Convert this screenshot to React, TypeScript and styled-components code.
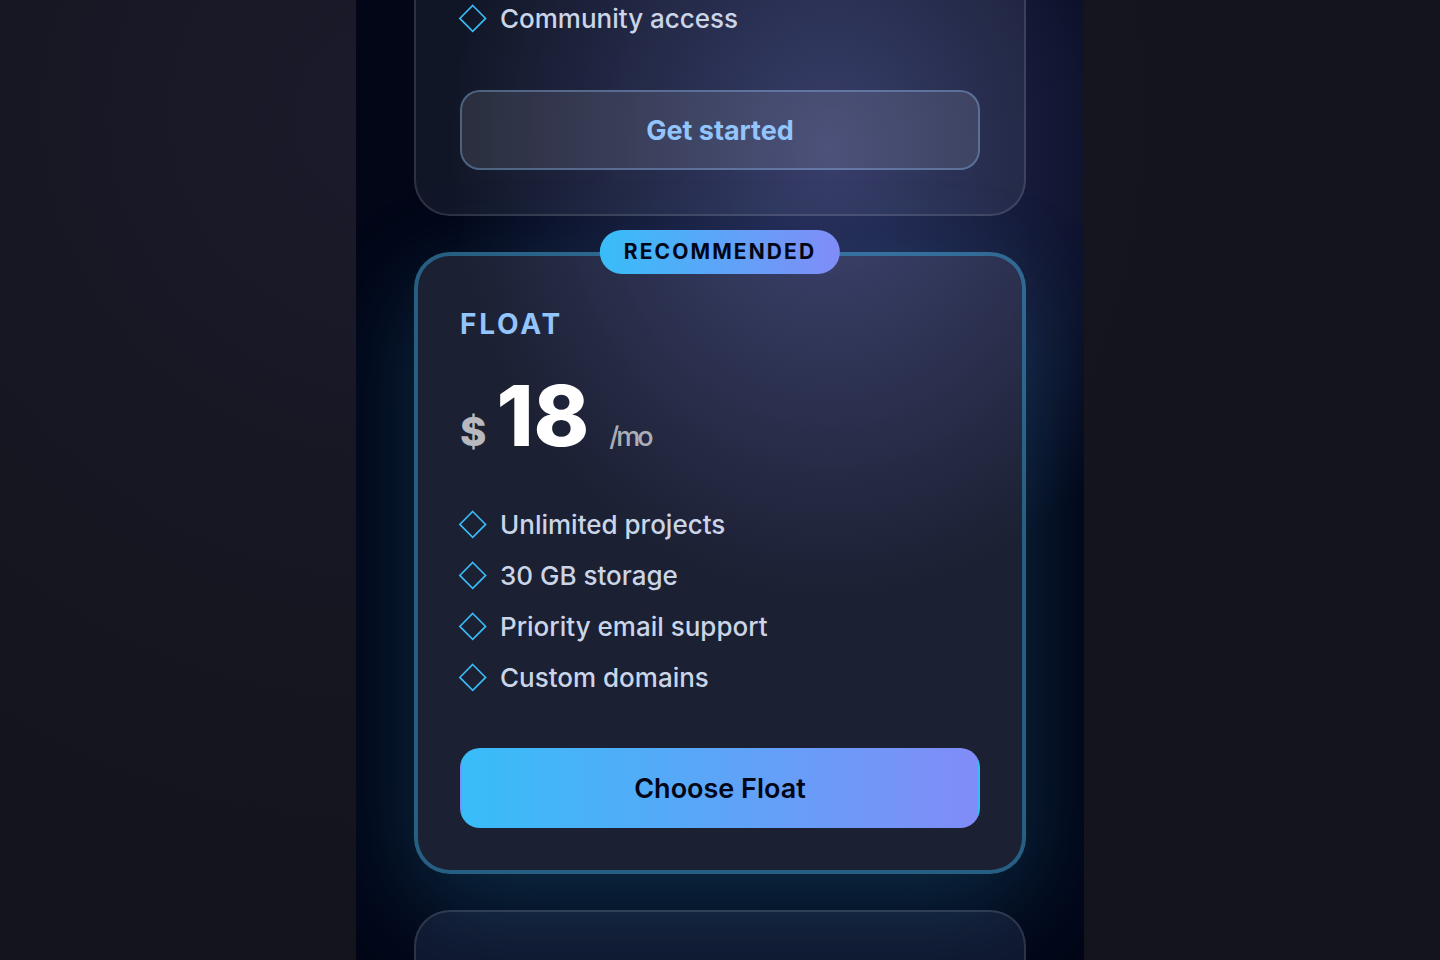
import React from "react";
import styled, { createGlobalStyle, css } from "styled-components";

const GlobalStyle = createGlobalStyle`
  *, *::before, *::after { box-sizing: border-box; }
  body {
    margin: 0;
    background: #14141c;
    font-family: Inter, "Liberation Sans", sans-serif;
    -webkit-font-smoothing: antialiased;
  }
`;

const accent = "linear-gradient(90deg, #38bdf8, #818cf8)";

const Page = styled.main`
  display: flex;
  justify-content: center;
  height: 100vh;
  overflow: hidden;
  background:
    radial-gradient(ellipse 56% 80% at 28% 12%, rgba(110, 110, 241, 0.07), transparent),
    #14141c;
`;

const Stage = styled.section`
  display: flex;
  flex-direction: column;
  gap: 36px;
  width: 100%;
  max-width: 728px;
  padding: 0 58px;
  background:
    radial-gradient(ellipse 380px 450px at 65% 150px, rgba(129, 140, 248, 0.33), transparent),
    #020617;
  overflow: hidden;
`;

type Edge = "top" | "bottom";

const Card = styled.article<{ $featured?: boolean; $open?: Edge }>`
  position: relative;
  display: flex;
  flex-direction: column;
  flex: none;
  padding: 44px;
  border: 2px solid rgba(255, 255, 255, 0.12);
  border-radius: 36px;
  background: rgba(220, 235, 255, 0.07);

  ${({ $open }) =>
    $open === "top" &&
    css`
      padding-top: 0;
      border-top: 0;
      border-top-left-radius: 0;
      border-top-right-radius: 0;
    `}

  ${({ $open }) =>
    $open === "bottom" &&
    css`
      flex: 1;
      border-bottom: 0;
      border-bottom-left-radius: 0;
      border-bottom-right-radius: 0;
      background: rgba(150, 190, 255, 0.09);
    `}

  ${({ $featured }) =>
    $featured &&
    css`
      padding: 42px;
      border: 4px solid rgba(56, 189, 248, 0.4);
      background: rgba(210, 220, 255, 0.12);
      box-shadow: 0 32px 104px rgba(56, 189, 248, 0.21);
    `}
`;

const Badge = styled.span`
  position: absolute;
  top: -26px;
  left: 50%;
  transform: translateX(-50%);
  padding: 0 24px;
  border-radius: 22px;
  background: ${accent};
  color: #020617;
  font-size: 21px;
  font-weight: 700;
  line-height: 44px;
  letter-spacing: 0.1em;
  text-transform: uppercase;
  white-space: nowrap;
`;

const PlanName = styled.h2`
  margin: 8px 0 0;
  color: #93c5fd;
  font-size: 28px;
  font-weight: 700;
  line-height: 36px;
  letter-spacing: 0.1em;
  text-transform: uppercase;
`;

const Price = styled.p`
  display: flex;
  align-items: baseline;
  margin: 32px 0 0;
  color: #fff;
  font-size: 84px;
  font-weight: 800;
  line-height: 84px;
`;

const Currency = styled.span`
  margin-right: 10px;
  color: rgba(255, 255, 255, 0.7);
  font-size: 40px;
  line-height: 40px;
`;

const Period = styled.span`
  margin-left: 20px;
  color: rgba(255, 255, 255, 0.65);
  font-size: 27px;
  font-weight: 500;
  line-height: 28px;
  letter-spacing: -3px;
`;

const Features = styled.ul`
  display: flex;
  flex-direction: column;
  gap: 18px;
  margin: 0;
  padding: 0;
  list-style: none;
`;

const Feature = styled.li`
  display: flex;
  align-items: center;
  gap: 14px;
  color: #cbd5e8;
  font-size: 26px;
  font-weight: 500;
  line-height: 33px;
`;

const Diamond = styled.svg`
  flex: none;
  width: 26px;
  height: 26px;
  overflow: visible;
  fill: none;
  stroke: #38bdf8;
  stroke-width: 1.6;
`;

const Action = styled.button<{ $primary?: boolean }>`
  height: 80px;
  border: 2px solid ${({ $primary }) => ($primary ? "transparent" : "rgba(147, 197, 253, 0.35)")};
  border-radius: 20px;
  background: ${({ $primary }) => ($primary ? accent : "rgba(255, 255, 255, 0.1)")};
  color: ${({ $primary }) => ($primary ? "#020617" : "#93c5fd")};
  font: ${({ $primary }) => ($primary ? 600 : 700)} 27px/33px Inter, "Liberation Sans", sans-serif;
  cursor: pointer;
`;

const FeatureBlock = styled.div<{ $top: number; $bottom: number }>`
  padding: ${({ $top, $bottom }) => `${$top}px 0 ${$bottom}px`};
`;

function FeatureList({ items }: { items: string[] }) {
  return (
    <Features>
      {items.map((item) => (
        <Feature key={item}>
          <Diamond viewBox="0 0 26 26" aria-hidden="true">
            <path d="M12.7 -.5 25.6 12.4 12.7 25.3 -.2 12.4Z" />
          </Diamond>
          {item}
        </Feature>
      ))}
    </Features>
  );
}

export default function App() {
  return (
    <>
      <GlobalStyle />
      <Page>
        <Stage>
          <Card $open="top">
            <FeatureBlock $top={2} $bottom={55}>
              <FeatureList items={["Community access"]} />
            </FeatureBlock>
            <Action type="button">Get started</Action>
          </Card>

          <Card $featured>
            <Badge>Recommended</Badge>
            <PlanName>Float</PlanName>
            <Price>
              <Currency>$</Currency>18<Period>/mo</Period>
            </Price>
            <FeatureBlock $top={50} $bottom={54}>
              <FeatureList
                items={["Unlimited projects", "30 GB storage", "Priority email support", "Custom domains"]}
              />
            </FeatureBlock>
            <Action type="button" $primary>
              Choose Float
            </Action>
          </Card>

          <Card $open="bottom" />
        </Stage>
      </Page>
    </>
  );
}
